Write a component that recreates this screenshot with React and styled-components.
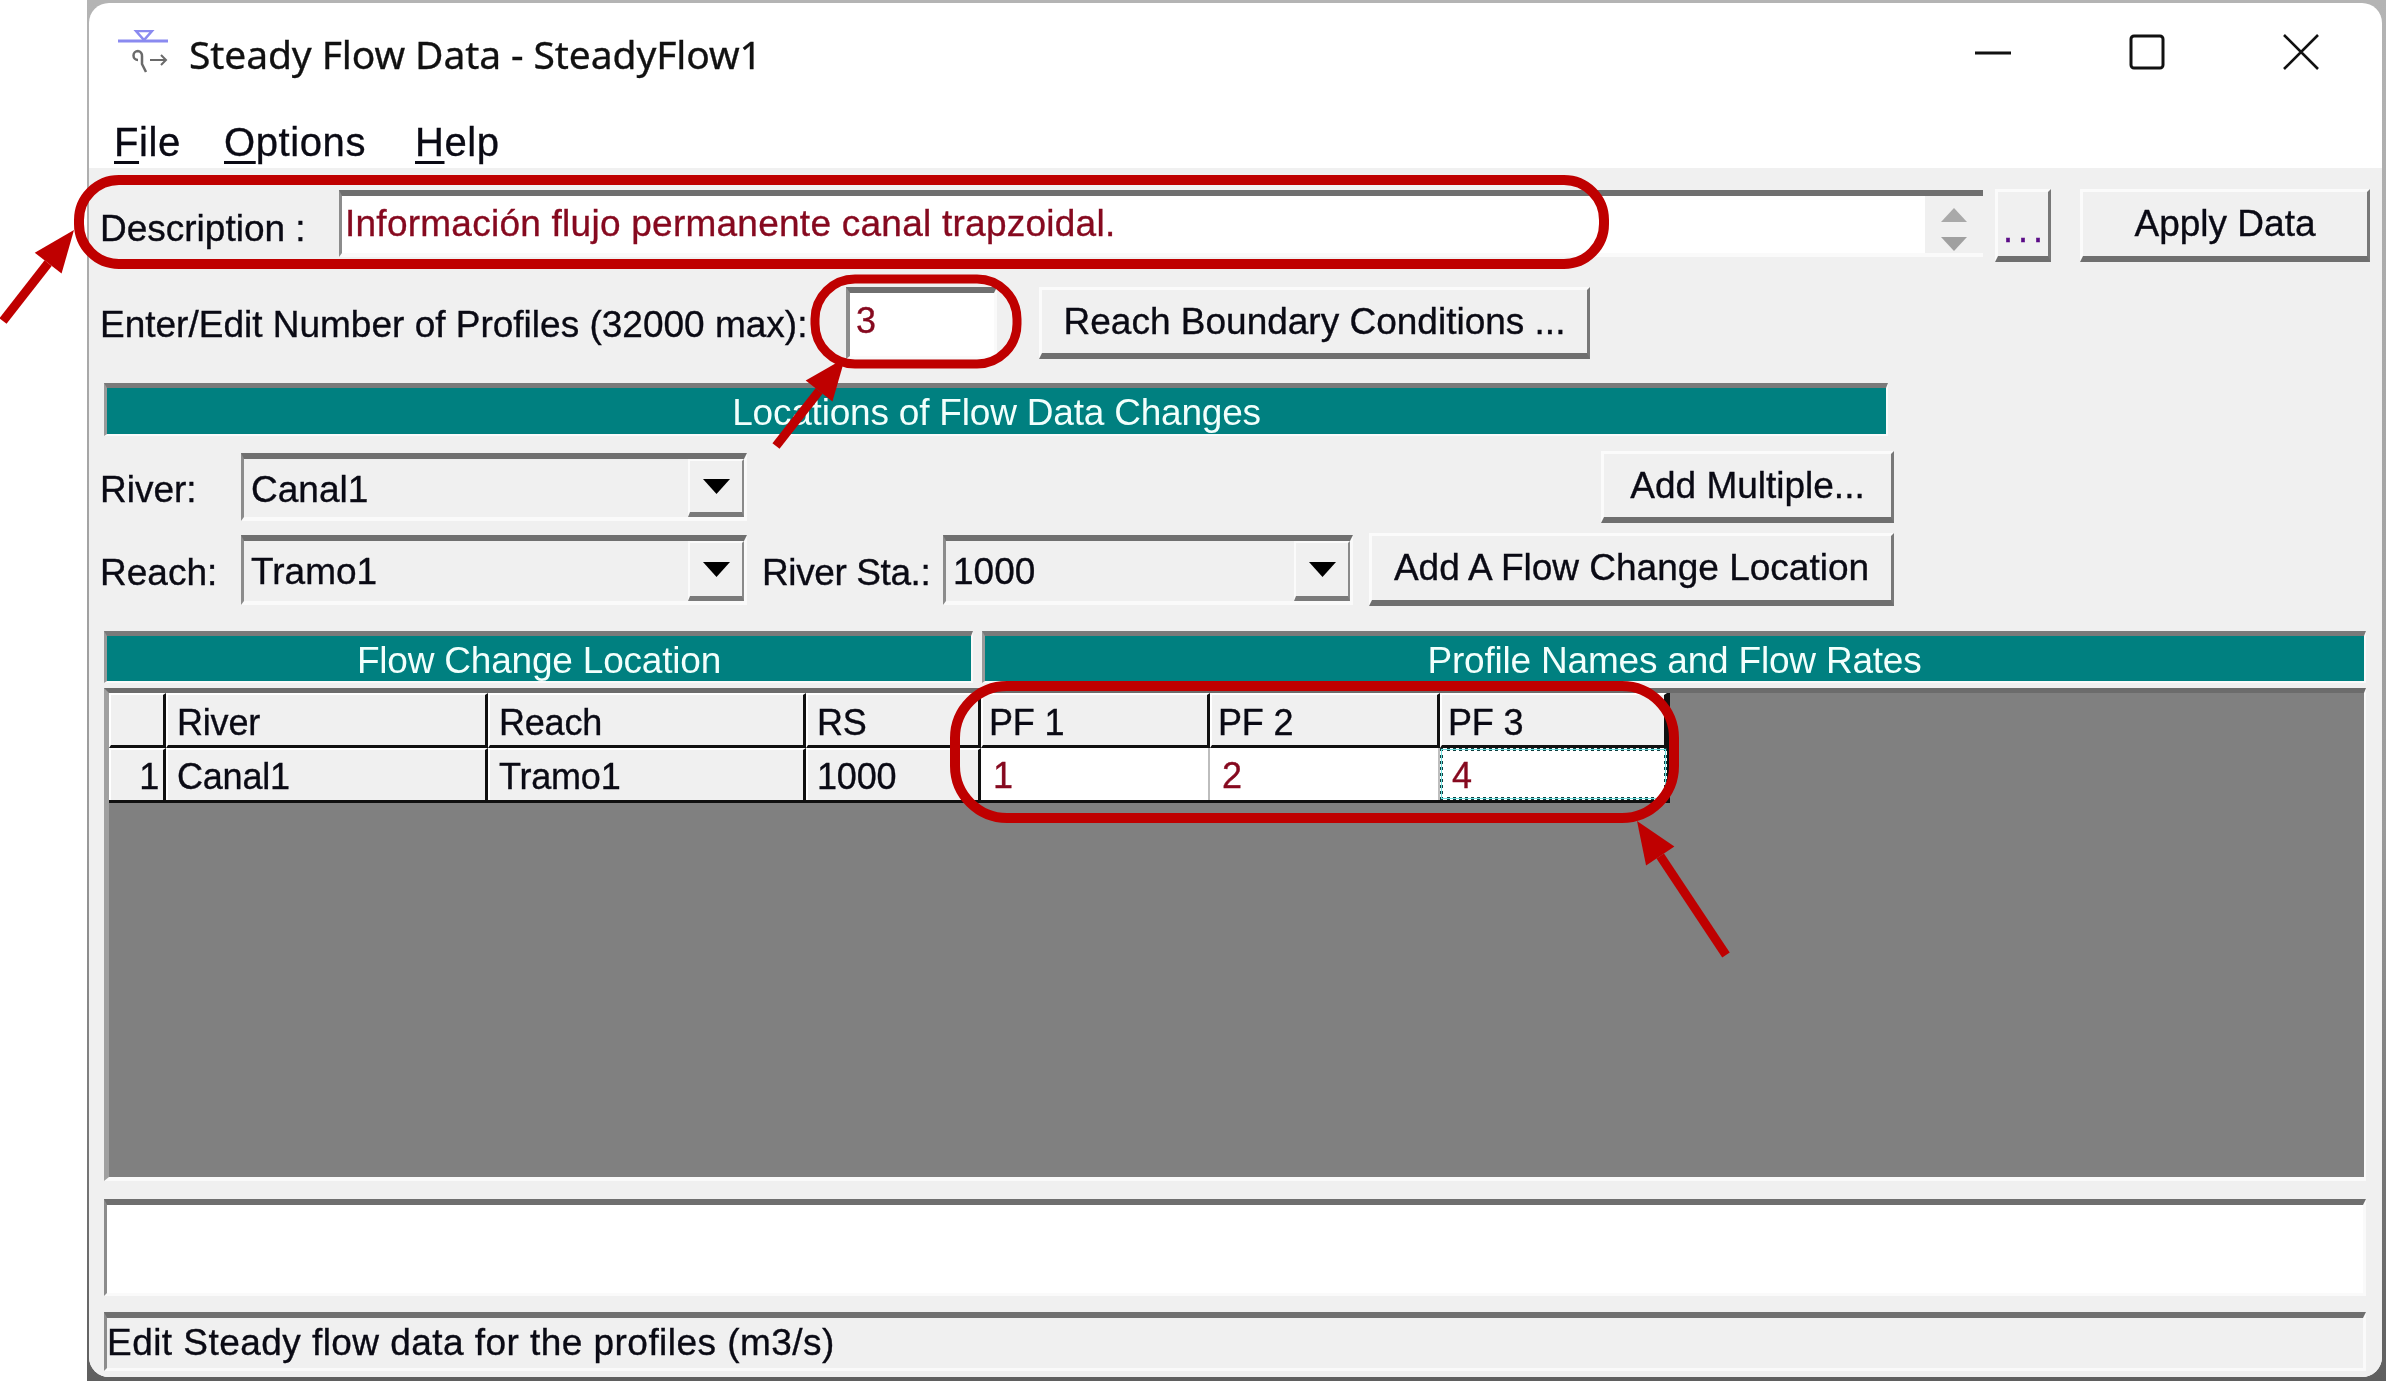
import React from 'react'
import styled, { createGlobalStyle } from 'styled-components'

const GlobalStyle = createGlobalStyle`
    html, body {
        margin: 0;
        padding: 0;
        background: #fff;
    }
    * {
        box-sizing: border-box;
    }
`

const Page = styled.div`
    position: relative;
    width: 2386px;
    height: 1381px;
    overflow: hidden;
    padding-left: 87px;
    background: #fff;
    font-family: "Liberation Sans", Arial, sans-serif;
    color: #0a0a14;
    filter: blur(0.5px);
    -webkit-text-stroke: 0.35px currentColor;
`

const Backdrop = styled.div`
    height: 100%;
    padding: 3px 4px 4px 2px;
    background: linear-gradient(to bottom, #b4b4b4 0%, #9a9a9a 60%, #5f5f5f 100%);
`

const Window = styled.div`
    display: flex;
    flex-direction: column;
    height: 100%;
    background: #fff;
    border-radius: 20px;
    overflow: hidden;
`

const TitleBar = styled.div`
    display: flex;
    align-items: center;
    height: 98px;
    padding: 0 63px 0 29px;
`

const TitleText = styled.div`
    flex: 1;
    margin: 2px 0 0 21px;
    font-family: "Noto Sans", sans-serif;
    font-size: 39px;
    letter-spacing: -0.1px;
    color: #111;
`

const WinControls = styled.div`
    display: flex;
    align-items: center;
    gap: 118px;
`

const MenuBar = styled.div`
    display: flex;
    height: 67px;
    padding: 18px 0 0 25px;
    align-items: flex-start;
`

const MenuItem = styled.div`
    flex: 0 0 ${props => props.$width}px;
    font-size: 40px;
    line-height: 46px;
    letter-spacing: 0.6px;
    u {
        text-underline-offset: 5px;
        text-decoration-thickness: 3px;
    }
`

const Body = styled.div`
    flex: 1;
    display: flex;
    flex-direction: column;
    padding: 21px 16px 0 11px;
    background: #f0f0f0;
`

const Row = styled.div`
    display: flex;
    align-items: center;
    flex: 0 0 ${props => props.$height}px;
    margin-top: ${props => props.$top || 0}px;
    width: ${props => props.$width ? props.$width + 'px' : 'auto'};
`

const Label = styled.div`
    flex: 0 0 ${props => props.$width}px;
    margin-left: ${props => props.$left || 0}px;
    margin-top: ${props => props.$top || 0}px;
    font-size: 37px;
    letter-spacing: ${props => props.$spacing || 0}px;
    white-space: nowrap;
`

const Sunken = styled.div`
    background: ${props => props.$bg || '#fff'};
    border-style: solid;
    border-width: 6px 3px 3px 4px;
    border-color: #6f6f6f #fafafa #fafafa #8c8c8c;
`

const DescField = styled(Sunken)`
    display: flex;
    flex: 0 0 1644px;
    height: 67px;
    align-self: flex-start;
    margin-top: 1px;
    border-width: 6px 0 4px 3px;
    color: #86091f;
    font-size: 37px;
`

const DescText = styled.div`
    flex: 1;
    line-height: 56px;
    padding-left: 3px;
    letter-spacing: 0.25px;
`

const Spinner = styled.div`
    display: flex;
    flex-direction: column;
    align-items: center;
    justify-content: space-between;
    flex: 0 0 58px;
    padding: 12px 0 2px;
    background: #f0f0f0;
`

const NumberField = styled(Sunken)`
    flex: 0 0 151px;
    height: 72px;
    padding-left: 6px;
    color: #86091f;
    font-size: 36px;
    line-height: 56px;
`

const Button = styled.div`
    display: flex;
    align-items: ${props => props.$bottom ? 'flex-end' : 'center'};
    justify-content: center;
    flex: 0 0 ${props => props.$width}px;
    height: ${props => props.$height}px;
    margin-left: ${props => props.$left || 0}px;
    background: #f0f0f0;
    border-style: solid;
    border-width: 3px 3px 6px 3px;
    border-color: #fbfbfb #787878 #6f6f6f #fbfbfb;
    font-size: 37px;
    white-space: nowrap;
`

const Dots = styled.span`
    margin: 0 -5px 11px 0;
    color: #5a0a86;
    font-size: 36px;
    line-height: 30px;
    letter-spacing: 5px;
`

const TealBar = styled.div`
    display: flex;
    align-items: center;
    justify-content: center;
    width: ${props => props.$width ? props.$width + 'px' : 'auto'};
    flex: ${props => props.$width ? '0 0 auto' : '1'};
    height: ${props => props.$height}px;
    margin-left: ${props => props.$left || 0}px;
    padding-top: 4px;
    background: #008080;
    border-style: solid;
    border-width: 5px 2px 2px 3px;
    border-color: #7a7a7a #fafafa #fafafa #9a9a9a;
    color: #f2fffc;
    font-size: 37px;
    letter-spacing: -0.2px;
    -webkit-text-stroke: 0;
`

const Combo = styled(Sunken)`
    display: flex;
    flex: 0 0 ${props => props.$width}px;
    height: ${props => props.$height || 68}px;
    background: #f0f0f0;
    border-width: 6px 3px 4px 3px;
`

const ComboText = styled.div`
    flex: 1;
    padding-left: 7px;
    font-size: 37px;
    line-height: 62px;
`

const ComboArrow = styled.div`
    display: flex;
    align-items: center;
    justify-content: center;
    flex: 0 0 56px;
    height: 100%;
    background: #f0f0f0;
    border-style: solid;
    border-width: 2px 2px 5px 2px;
    border-color: #fbfbfb #8a8a8a #7a7a7a #fbfbfb;
`

const Spacer = styled.div`
    flex: 1;
`

const HeaderRow = styled.div`
    display: flex;
    flex: 0 0 auto;
    margin-top: 25px;
    padding-left: 4px;
`

const GridArea = styled.div`
    flex: 0 0 493px;
    margin: 5px 0 0 4px;
    background: #808080;
    border-style: solid;
    border-width: 5px 2px 4px 5px;
    border-color: #6c6c6c #fafafa #fafafa #a0a0a0;
`

const GridTable = styled.div`
    display: grid;
    grid-template-columns: 57px 322px 318px 175px 229px 230px 227px;
    grid-template-rows: 55px 52px;
    width: max-content;
    background: #f0f0f0;
    border-bottom: 3px solid #101010;
    border-right: 3px solid #101010;
`

const Cell = styled.div`
    background: #f0f0f0;
    border-style: solid;
    border-width: 2px 3px ${props => props.$data ? 0 : 3}px 2px;
    border-color: #fff #101010 #101010 #fff;
    font-size: 36px;
    line-height: ${props => props.$data ? 54 : 56}px;
    padding-left: ${props => props.$tight ? 6 : 9}px;
    text-align: ${props => props.$right ? 'right' : 'left'};
    padding-right: ${props => props.$right ? 4 : 0}px;
    letter-spacing: -0.2px;
    white-space: nowrap;
`

const EditCell = styled.div`
    background: #fff;
    border-right: 2px solid #bdbdbd;
    padding-left: 12px;
    color: #86091f;
    font-size: 36px;
    line-height: 56px;
    ${props => props.$active && `
        border: 3px dotted #0f3f3f;
        outline: 1px solid #6fe0e0;
        outline-offset: -2px;
        padding-left: 9px;
        line-height: 50px;
    `}
`

const MessageBox = styled(Sunken)`
    flex: 0 0 97px;
    margin: 18px 0 0 4px;
    border-width: 6px 3px 3px 3px;
`

const StatusBar = styled(Sunken)`
    flex: 0 0 54px;
    margin: 16px 0 0 4px;
    background: #f0f0f0;
    border-width: 6px 3px 3px 3px;
    font-size: 37px;
    line-height: 50px;
    letter-spacing: 0.45px;
`

const Annotations = styled.svg`
    position: absolute;
    left: 0;
    top: 0;
    pointer-events: none;
`

const AppIcon = () => (
    <svg width="50" height="44" viewBox="0 0 50 44" fill="none">
        <path d="M0 11H50" stroke="#8a8af0" strokeWidth="3" />
        <path d="M18 1H34L26 10Z" stroke="#8a8af0" strokeWidth="2.5" />
        <path d="M20 21a4.5 4.5 0 1 0 0 9M20 21a4.5 4.5 0 0 1 4 5v8l4 8" stroke="#6a6a6a" strokeWidth="2.5" />
        <path d="M32 30H48M43 25l5 5-5 5" stroke="#6a6a6a" strokeWidth="2" />
    </svg>
)

const MinIcon = () => (
    <svg width="36" height="36" viewBox="0 0 36 36" fill="none">
        <path d="M0 19H36" stroke="#111" strokeWidth="3" />
    </svg>
)

const MaxIcon = () => (
    <svg width="36" height="36" viewBox="0 0 36 36" fill="none">
        <rect x="2" y="2" width="32" height="32" rx="3" stroke="#111" strokeWidth="3" />
    </svg>
)

const CloseIcon = () => (
    <svg width="36" height="36" viewBox="0 0 36 36" fill="none">
        <path d="M1 1L35 35M35 1L1 35" stroke="#111" strokeWidth="2.6" />
    </svg>
)

const Triangle = ({ up, color, width, height }) => (
    <svg width={width} height={height} viewBox="0 0 10 10" preserveAspectRatio="none">
        <path d={up ? 'M5 0L10 10H0Z' : 'M0 0H10L5 10Z'} fill={color} />
    </svg>
)

const ComboBox = ({ value, width, height }) => (
    <Combo $width={width} $height={height}>
        <ComboText>{value}</ComboText>
        <ComboArrow>
            <Triangle color="#000" width={27} height={15} />
        </ComboArrow>
    </Combo>
)

const RED = '#bf0000'

const Arrow = ({ x1, y1, x2, y2, head = 42, half = 17 }) => {
    const len = Math.hypot(x2 - x1, y2 - y1)
    const ux = (x2 - x1) / len
    const uy = (y2 - y1) / len
    const bx = x2 - ux * head
    const by = y2 - uy * head
    return (
        <g>
            <line x1={x1} y1={y1} x2={bx} y2={by} stroke={RED} strokeWidth="9" />
            <polygon
                points={`${x2},${y2} ${bx - uy * half},${by + ux * half} ${bx + uy * half},${by - ux * half}`}
                fill={RED}
            />
        </g>
    )
}

const pfNames = ['PF 1', 'PF 2', 'PF 3']
const pfValues = ['1', '2', '4']

const App = () => (
    <Page>
        <GlobalStyle />
        <Backdrop>
            <Window>
                <TitleBar>
                    <AppIcon />
                    <TitleText>Steady Flow Data - SteadyFlow1</TitleText>
                    <WinControls>
                        <MinIcon />
                        <MaxIcon />
                        <CloseIcon />
                    </WinControls>
                </TitleBar>
                <MenuBar>
                    <MenuItem $width={110}><u>F</u>ile</MenuItem>
                    <MenuItem $width={191}><u>O</u>ptions</MenuItem>
                    <MenuItem $width={100}><u>H</u>elp</MenuItem>
                </MenuBar>
                <Body>
                    <Row $height={73}>
                        <Label $width={239} $top={6}>Description :</Label>
                        <DescField>
                            <DescText>Información flujo permanente canal trapzoidal.</DescText>
                            <Spinner>
                                <Triangle up color="#a9a9a9" width={26} height={14} />
                                <Triangle color="#a0a0a0" width={26} height={14} />
                            </Spinner>
                        </DescField>
                        <Button $width={56} $height={73} $left={12} $bottom><Dots>...</Dots></Button>
                        <Button $width={290} $height={73} $left={29}>Apply Data</Button>
                    </Row>
                    <Row $height={72} $top={25}>
                        <Label $width={746} $top={3}>Enter/Edit Number of Profiles (32000 max):</Label>
                        <NumberField>3</NumberField>
                        <Button $width={551} $height={72} $left={42}>Reach Boundary Conditions ...</Button>
                    </Row>
                    <Row $height={53} $top={24}>
                        <TealBar $width={1784} $height={53} $left={4}>Locations of Flow Data Changes</TealBar>
                    </Row>
                    <Row $height={72} $top={15} $width={1794}>
                        <Label $width={141} $top={6}>River:</Label>
                        <ComboBox value="Canal1" width={506} />
                        <Spacer />
                        <Button $width={293} $height={72}>Add Multiple...</Button>
                    </Row>
                    <Row $height={73} $top={10} $width={1794}>
                        <Label $width={141} $top={6}>Reach:</Label>
                        <ComboBox value="Tramo1" width={506} height={70} />
                        <Label $width={181} $left={15} $top={6} $spacing={-0.4}>River Sta.:</Label>
                        <ComboBox value="1000" width={410} height={70} />
                        <Button $width={525} $height={73} $left={16}>Add A Flow Change Location</Button>
                    </Row>
                    <HeaderRow>
                        <TealBar $width={869} $height={52}>Flow Change Location</TealBar>
                        <TealBar $height={52} $left={9}>Profile Names and Flow Rates</TealBar>
                    </HeaderRow>
                    <GridArea>
                        <GridTable>
                            <Cell />
                            <Cell>River</Cell>
                            <Cell>Reach</Cell>
                            <Cell>RS</Cell>
                            {pfNames.map(name => <Cell key={name} $tight>{name}</Cell>)}
                            <Cell $data $right>1</Cell>
                            <Cell $data>Canal1</Cell>
                            <Cell $data>Tramo1</Cell>
                            <Cell $data>1000</Cell>
                            {pfValues.map((value, i) => (
                                <EditCell key={i} $active={i === 2}>{value}</EditCell>
                            ))}
                        </GridTable>
                    </GridArea>
                    <MessageBox />
                    <StatusBar>Edit Steady flow data for the profiles (m3/s)</StatusBar>
                </Body>
            </Window>
        </Backdrop>
        <Annotations width="2386" height="1381" viewBox="0 0 2386 1381" fill="none">
            <rect x="79" y="180" width="1525" height="84" rx="40" stroke={RED} strokeWidth="10" />
            <rect x="815" y="279" width="202" height="85" rx="40" stroke={RED} strokeWidth="9" />
            <rect x="955" y="686" width="719" height="132" rx="52" stroke={RED} strokeWidth="10" />
            <Arrow x1={3} y1={321} x2={74} y2={230} />
            <Arrow x1={776} y1={446} x2={845} y2={358} />
            <Arrow x1={1726} y1={955} x2={1637} y2={821} />
        </Annotations>
    </Page>
)

export default App
